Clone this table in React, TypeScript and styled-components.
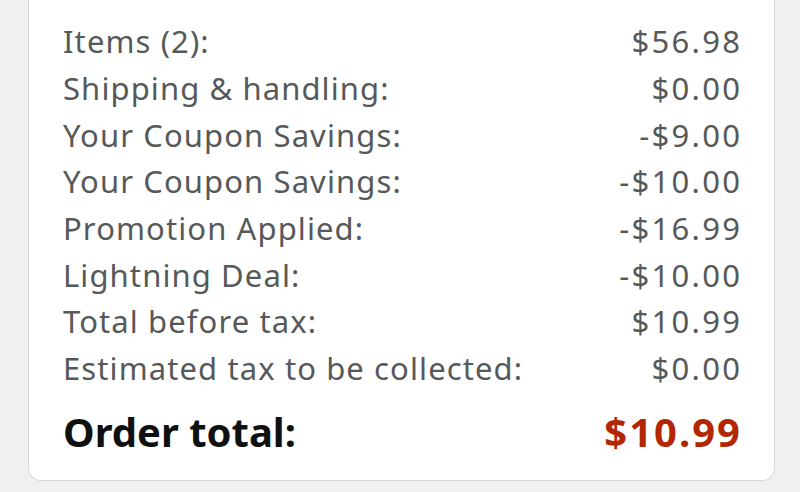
import styled, { createGlobalStyle } from "styled-components"

const GlobalStyle = createGlobalStyle`
    html, body {
        margin: 0;
        padding: 0;
        background: #f0f0f0;
        font-family: "Noto Sans", "Open Sans", Arial, sans-serif;
    }
`

const Page = styled.div({
    width: 800,
    height: 492,
    padding: '0 25px 0 28px',
    boxSizing: 'border-box',
    overflow: 'hidden',
})

const Card = styled.div({
    background: '#fff',
    border: '1.5px solid #d5d9d9',
    borderTop: 'none',
    borderRadius: '0 0 13px 13px',
    padding: '18px 34px 22px 34px',
    display: 'flex',
    flexDirection: 'column',
})

const Row = styled.div({
    display: 'flex',
    justifyContent: 'space-between',
    alignItems: 'center',
    height: 46.7,
    fontSize: 31,
    letterSpacing: '1.1px',
    color: '#565959',
})

const TotalRow = styled.div({
    display: 'flex',
    justifyContent: 'space-between',
    alignItems: 'center',
    height: 52,
    marginTop: 14,
    fontSize: 40,
    fontWeight: 700,
    color: '#0f1111',
})

const Label = styled.span({
    letterSpacing: 'inherit',
})

const Price = styled.span<{ $accent?: boolean }>(p => ({
    color: p.$accent ? '#b12704' : 'inherit',
    letterSpacing: p.$accent ? '2px' : '2.3px',
    marginRight: p.$accent ? -2 : -2.3,
}))

const lines: [string, string][] = [
    ['Items (2):', '$56.98'],
    ['Shipping & handling:', '$0.00'],
    ['Your Coupon Savings:', '-$9.00'],
    ['Your Coupon Savings:', '-$10.00'],
    ['Promotion Applied:', '-$16.99'],
    ['Lightning Deal:', '-$10.00'],
    ['Total before tax:', '$10.99'],
    ['Estimated tax to be collected:', '$0.00'],
]

export default function App() {
    return <>
        <GlobalStyle />
        <Page>
            <Card>
                {lines.map(([label, value], i) => (
                    <Row key={i}>
                        <Label>{label}</Label>
                        <Price>{value}</Price>
                    </Row>
                ))}
                <TotalRow>
                    <Label>Order total:</Label>
                    <Price $accent>$10.99</Price>
                </TotalRow>
            </Card>
        </Page>
    </>
}
